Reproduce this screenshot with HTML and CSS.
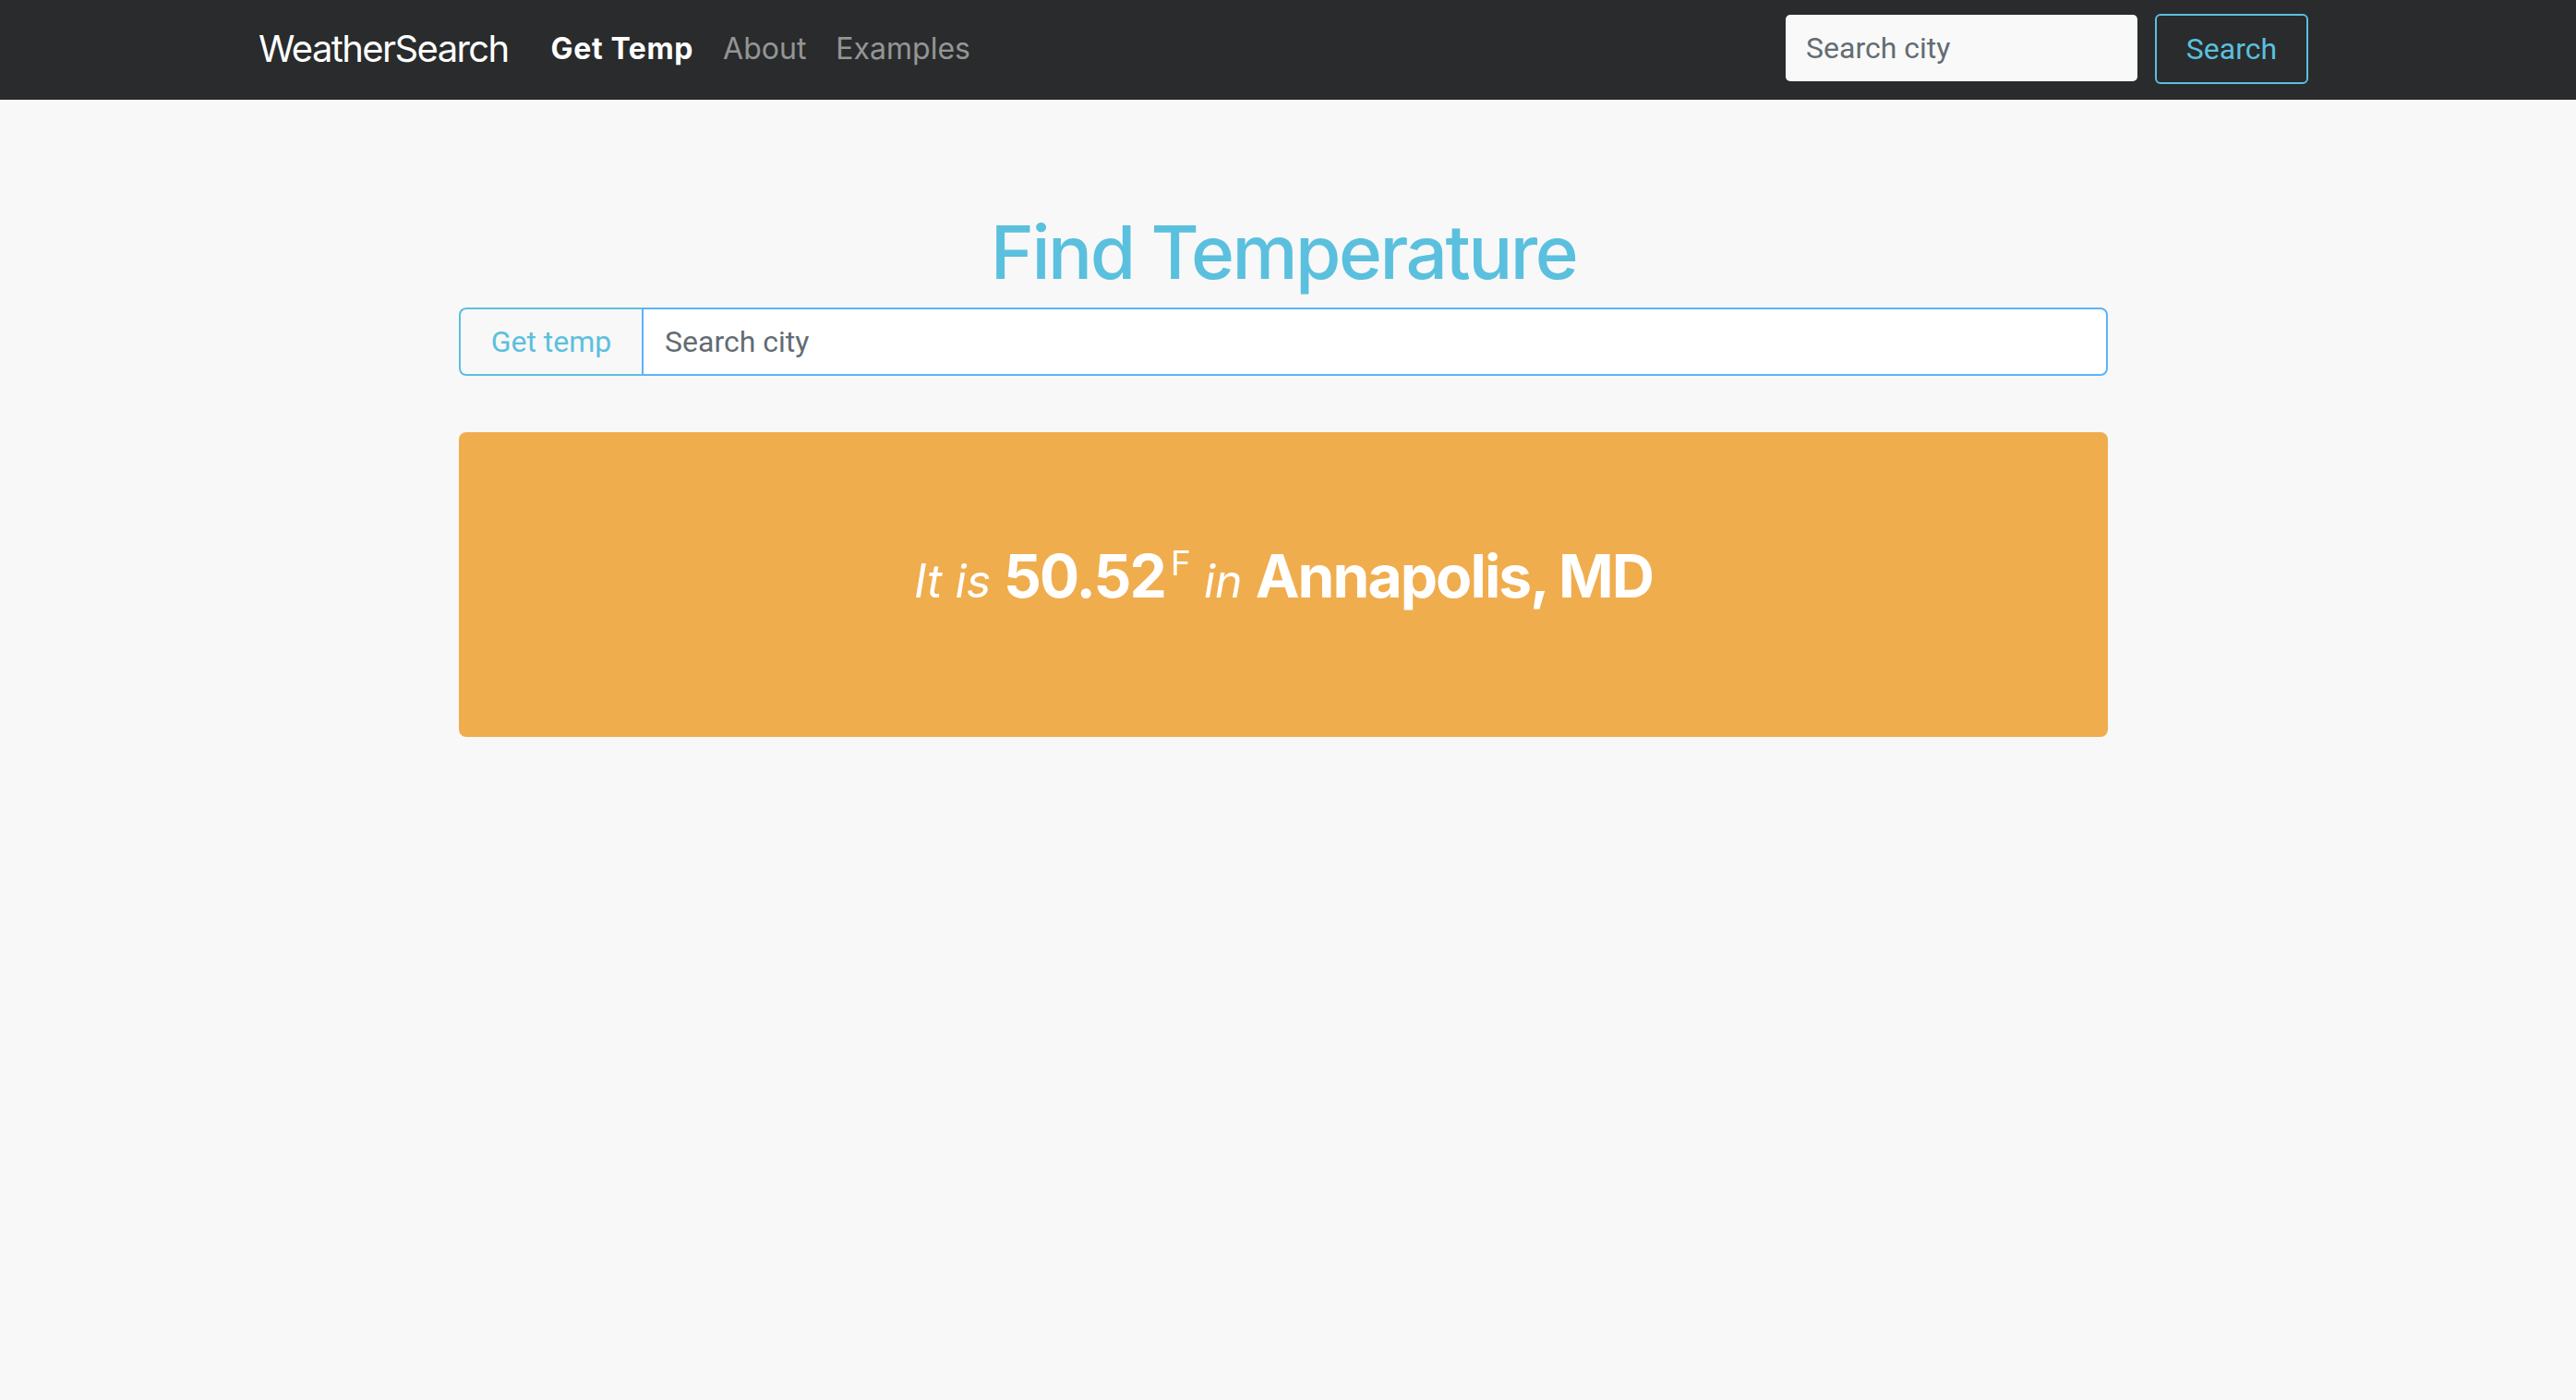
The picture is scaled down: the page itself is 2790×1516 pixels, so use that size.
FILE: index.html
```html
<!DOCTYPE html>
<html lang="en">
<head>
<meta charset="utf-8">
<title>WeatherSearch</title>
<link rel="stylesheet" href="styles.css">
</head>
<body>
<nav class="navbar">
  <a class="brand" href="#">WeatherSearch</a>
  <ul class="nav">
    <li><a class="nav-link active" href="#">Get Temp</a></li>
    <li><a class="nav-link" href="#">About</a></li>
    <li><a class="nav-link" href="#">Examples</a></li>
  </ul>
  <form class="nav-form">
    <input class="nav-input" type="text" placeholder="Search city">
    <button class="nav-btn" type="button">Search</button>
  </form>
</nav>
<main class="main">
  <h1 class="title">Find Temperature</h1>
  <div class="input-group">
    <button class="addon" type="button">Get temp</button>
    <input class="city-input" type="text" placeholder="Search city">
  </div>
  <div class="alert">
    <p class="result"><em>It is</em> <strong class="big">50.52</strong><sup class="unit">F</sup> <em>in</em> <strong class="big">Annapolis, MD</strong></p>
  </div>
</main>
</body>
</html>
```
FILE: styles.css
```css
html, body {
  margin: 0;
  padding: 0;
}
body {
  background: #f8f8f8;
  font-family: Inter, "Noto Sans", sans-serif;
  min-height: 1516px;
}
.navbar {
  height: 108px;
  box-sizing: border-box;
  background: #292b2c;
  display: flex;
  align-items: center;
  padding: 0 290px 4px 280px;
}
.brand {
  font-size: 40px;
  color: #fff;
  text-decoration: none;
  margin-right: 30px;
  letter-spacing: -1.6px;
}
.nav {
  list-style: none;
  margin: 0;
  padding: 0;
  display: flex;
}
.nav-link {
  display: block;
  padding: 0 16px;
  font-size: 32px;
  color: rgba(255, 255, 255, 0.5);
  text-decoration: none;
}
.nav-link.active {
  color: #fff;
  font-weight: 700;
  letter-spacing: 0.6px;
}
.nav-form {
  margin-left: auto;
  display: flex;
  align-items: center;
  gap: 19px;
}
.nav-input {
  width: 381px;
  height: 72px;
  box-sizing: border-box;
  border: none;
  border-radius: 5px;
  background: #f9f9f9;
  padding: 0 22px;
  font-family: Roboto, sans-serif;
  font-size: 32px;
  color: #464a4c;
  outline: none;
}
.nav-input::placeholder,
.city-input::placeholder {
  color: #636c72;
  opacity: 1;
}
.nav-btn {
  width: 166px;
  height: 76px;
  box-sizing: border-box;
  border: 2px solid #5bc0de;
  border-radius: 6px;
  background: transparent;
  color: #5bc0de;
  font-family: Roboto, sans-serif;
  font-size: 32px;
  padding: 0;
  margin-top: 2px;
}
.main {
  width: 1786px;
  margin-left: 497px;
}
.title {
  margin: 121px 0 16px;
  font-size: 80px;
  line-height: 88px;
  font-weight: 500;
  color: #5bc0de;
  text-align: center;
  letter-spacing: -2.5px;
}
.input-group {
  display: flex;
  height: 74px;
}
.addon {
  width: 198px;
  box-sizing: border-box;
  border: 2px solid #5bc0de;
  border-right: none;
  border-radius: 8px 0 0 8px;
  background: transparent;
  color: #5bc0de;
  font-family: Roboto, sans-serif;
  font-size: 32px;
  padding: 0;
}
.city-input {
  flex: 1;
  box-sizing: border-box;
  border: 2px solid #5cb3fd;
  border-radius: 0 8px 8px 0;
  background: #fff;
  padding: 0 0 0 23px;
  font-family: Roboto, sans-serif;
  font-size: 32px;
  color: #464a4c;
  outline: none;
}
.alert {
  margin-top: 61px;
  height: 330px;
  box-sizing: border-box;
  background: #f0ad4e;
  border-radius: 8px;
  padding-top: 116px;
  color: #fff;
  text-align: center;
}
.result {
  margin: 0;
  font-size: 50px;
  line-height: 80px;
}
.result em {
  font-style: italic;
}
.big {
  font-size: 64px;
  font-weight: 700;
  letter-spacing: -1.9px;
}
.unit {
  font-size: 37px;
  line-height: 0;
  vertical-align: 24px;
  margin-left: 6px;
}
```
